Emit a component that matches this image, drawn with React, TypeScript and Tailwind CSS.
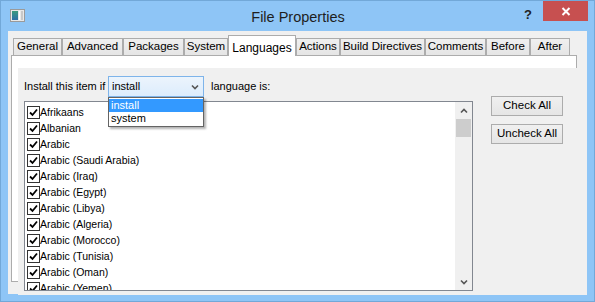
import React from "react";

const tabs = [
  { label: "General", w: "w-[49px]" },
  { label: "Advanced", w: "w-[61px]" },
  { label: "Packages", w: "w-[61px]" },
  { label: "System", w: "w-[44px]" },
  { label: "Languages", w: "w-[68px]", active: true },
  { label: "Actions", w: "w-[44px]" },
  { label: "Build Directives", w: "w-[85px]" },
  { label: "Comments", w: "w-[61px]" },
  { label: "Before", w: "w-[44px]" },
  { label: "After", w: "w-[40px]" },
];

const languages = [
  "Afrikaans",
  "Albanian",
  "Arabic",
  "Arabic (Saudi Arabia)",
  "Arabic (Iraq)",
  "Arabic (Egypt)",
  "Arabic (Libya)",
  "Arabic (Algeria)",
  "Arabic (Morocco)",
  "Arabic (Tunisia)",
  "Arabic (Oman)",
  "Arabic (Yemen)",
];

function CheckBox() {
  return (
    <span className="w-[13px] h-[13px] border border-[#333] bg-white flex items-center justify-center shrink-0">
      <svg width="9" height="9" viewBox="0 0 9 9">
        <path d="M1 4.5 L3.5 7 L8 1.5" stroke="#000" strokeWidth="1.8" fill="none" />
      </svg>
    </span>
  );
}

function Chevron({ down = true }: { down?: boolean }) {
  return (
    <svg width="8" height="6" viewBox="0 0 8 6">
      <path
        d={down ? "M1 1.5 L4 4.5 L7 1.5" : "M1 4.5 L4 1.5 L7 4.5"}
        stroke="#555"
        strokeWidth="1.6"
        fill="none"
      />
    </svg>
  );
}

export default function App() {
  return (
    <div
      className="w-[595px] h-[302px] bg-[#8ec5f6] border border-[#72a8d8] flex flex-col overflow-hidden text-black"
      style={{ fontFamily: '"Liberation Sans", Arial, sans-serif' }}
    >
      {/* Title bar */}
      <div className="h-[30px] flex items-start relative shrink-0">
        <div className="ml-[9px] mt-[8px] w-[15px] h-[13px] border border-[#9a9a9a] bg-[#e8e8e8] flex p-[1px] gap-[1px]">
          <div className="w-[7px] h-full bg-gradient-to-b from-[#3d9a7c] to-[#2f6fa8]" />
          <div className="w-[2px] h-full bg-white" />
          <div className="w-[2px] h-full bg-[#c8c8c8]" />
        </div>
        <div className="flex-1 text-center text-[14.5px] text-[#1e1e1e] pt-[6px] pl-[47px]">
          File Properties
        </div>
        <div className="text-[13px] font-bold text-[#222] mt-[4px] mr-[11px]">?</div>
        <div className="w-[45px] h-[20px] bg-[#c75050] flex items-center justify-center mr-[6px]">
          <svg width="10" height="9" viewBox="0 0 10 9">
            <path d="M1.5 1 L8.5 8 M8.5 1 L1.5 8" stroke="#fff" strokeWidth="2" />
          </svg>
        </div>
      </div>

      {/* Client area */}
      <div className="mx-[7px] h-[263px] bg-[#f0f0f0] flex flex-col">
        {/* Tabs */}
        <div className="flex items-end h-[24px] pl-[5px] relative z-10 shrink-0">
          {tabs.map((t) =>
            t.active ? (
              <div
                key={t.label}
                className={`${t.w} h-[21px] bg-white border border-b-0 border-[#acacac] text-[12px] flex items-start justify-center pt-[3px] -mb-[1px]`}
              >
                {t.label}
              </div>
            ) : (
              <div
                key={t.label}
                className={`${t.w} h-[17px] bg-gradient-to-b from-[#f0f0f0] to-[#e5e5e5] border border-b-0 border-[#acacac] text-[11.5px] flex items-center justify-center`}
              >
                {t.label}
              </div>
            )
          )}
        </div>

        {/* Tab page */}
        <div className="ml-[3px] w-[566px] h-[227px] bg-white border border-[#acacac] shrink-0">
          <div className="ml-[6px] mt-[12px] w-[569px] h-[227px] bg-[#f0f0f0] flex text-[11px]">
            {/* Left column */}
            <div className="pl-[6px] pt-[8px] flex flex-col gap-[4px]">
              <div className="flex items-center h-[21px] relative">
                <span className="w-[84px]">Install this item if</span>
                <div className="w-[96px] h-[21px] border border-[#7eb4ea] bg-gradient-to-b from-[#ecf4fc] to-[#dcecfc] flex items-center pl-[3px] pr-[4px] justify-between">
                  <span>install</span>
                  <Chevron />
                </div>
                <span className="ml-[7px]">language is:</span>

                {/* Dropdown list */}
                <div className="absolute left-[84px] top-[21px] w-[96px] bg-white border border-[#646464] shadow-[2px_2px_2px_rgba(0,0,0,0.3)] z-20 flex flex-col py-[1px]">
                  <div className="h-[13px] bg-[#3399ff] text-white pl-[2px] leading-[13px]">install</div>
                  <div className="h-[13px] pl-[2px] leading-[13px]">system</div>
                </div>
              </div>

              {/* Listbox */}
              <div className="w-[449px] h-[190px] border border-[#828790] bg-white flex overflow-hidden">
                <div className="flex-1 pl-[2px] pt-[2px] flex flex-col">
                  {languages.map((l) => (
                    <div key={l} className="h-[16px] flex items-center shrink-0">
                      <CheckBox />
                      <span className="text-[10.5px] leading-none">{l}</span>
                    </div>
                  ))}
                </div>
                <div className="w-[17px] h-full bg-[#f0f0f0] flex flex-col items-center">
                  <div className="h-[17px] flex items-center justify-center">
                    <Chevron down={false} />
                  </div>
                  <div className="w-[15px] h-[18px] bg-[#cdcdcd]" />
                  <div className="flex-1" />
                  <div className="h-[17px] flex items-center justify-center">
                    <Chevron />
                  </div>
                </div>
              </div>
            </div>

            {/* Right column */}
            <div className="ml-[18px] pt-[28px] flex flex-col gap-[8px]">
              <button className="w-[72px] h-[20px] border border-[#acacac] bg-gradient-to-b from-[#f0f0f0] to-[#e5e5e5] text-[11.5px] flex items-center justify-center">
                Check All
              </button>
              <button className="w-[72px] h-[20px] border border-[#acacac] bg-gradient-to-b from-[#f0f0f0] to-[#e5e5e5] text-[11.5px] flex items-center justify-center">
                Uncheck All
              </button>
            </div>
          </div>
        </div>
      </div>
    </div>
  );
}
